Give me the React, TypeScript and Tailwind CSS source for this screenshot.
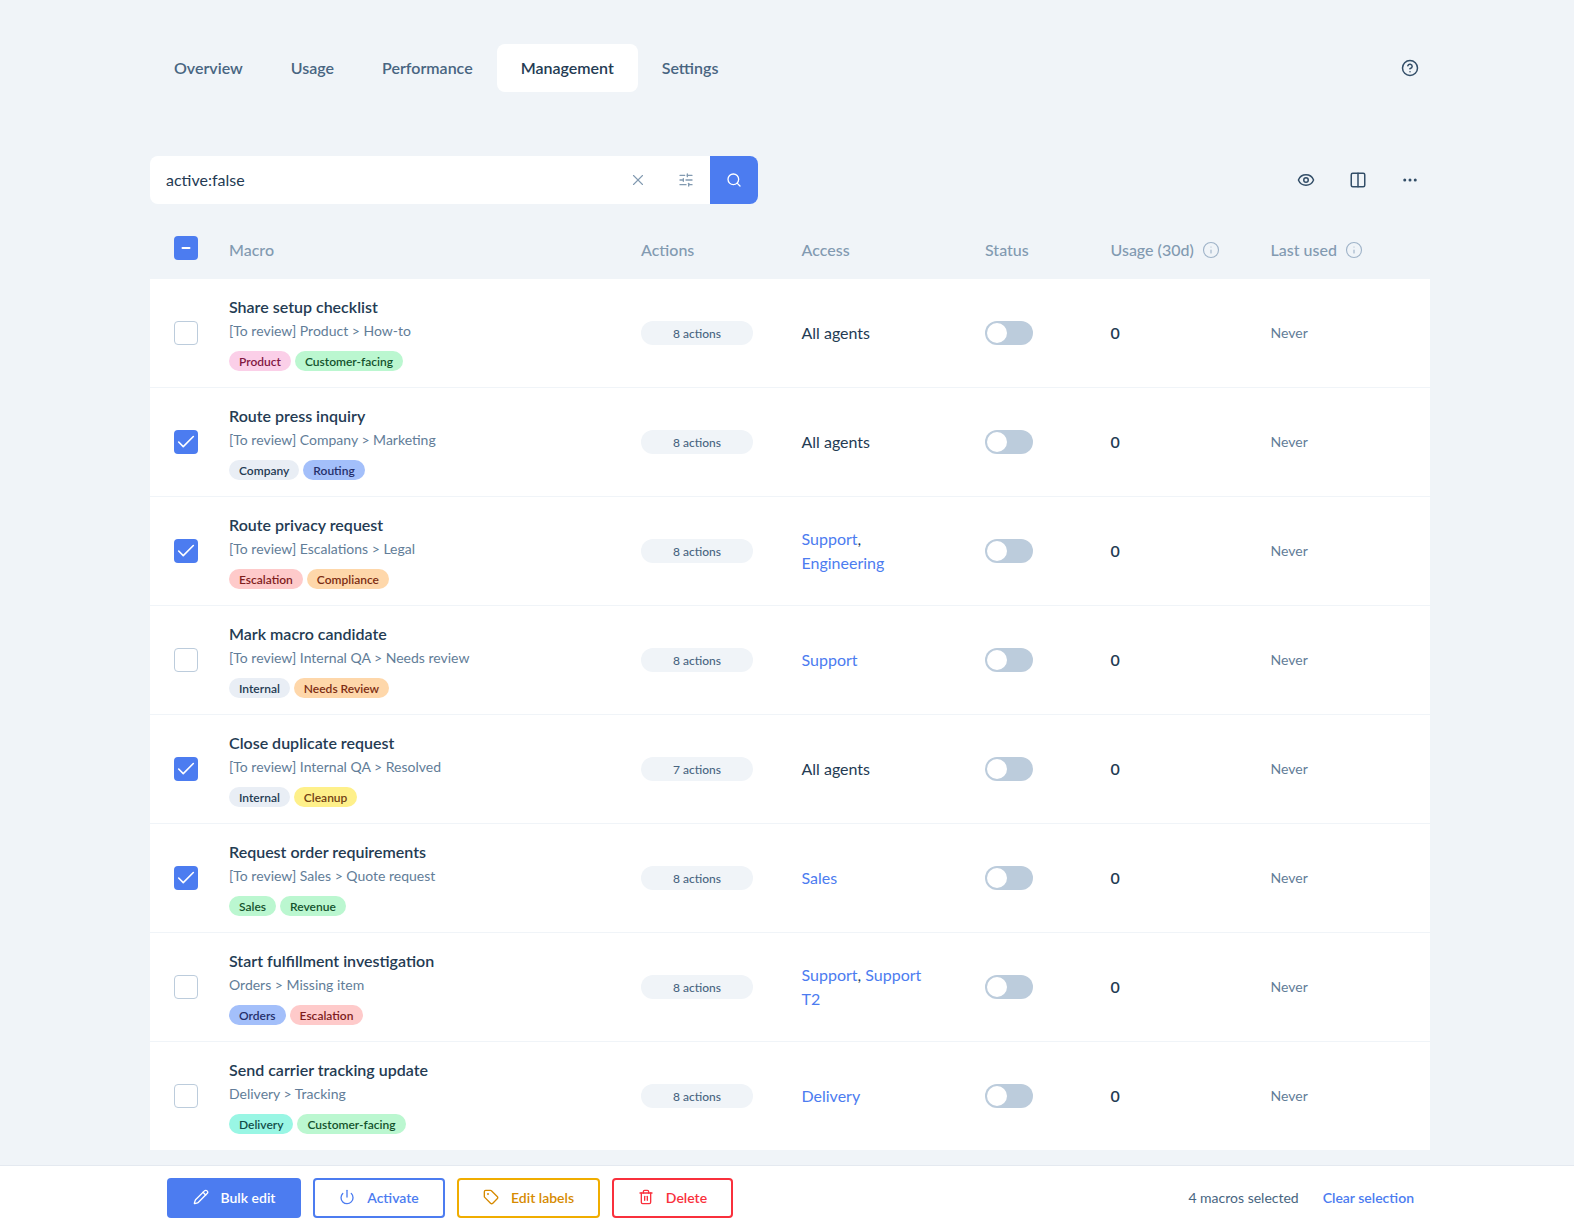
import { Check, CircleHelp, Columns2, Ellipsis, Eye, Info, Minus, Pencil, Power, Search, SlidersHorizontal, Tag, Trash2, X } from 'lucide-react'

const tagStyles: Record<string, string> = {
  Product: 'bg-[#fbcfe8] text-[#831843]',
  'Customer-facing': 'bg-[#bbf7d0] text-[#14532d]',
  Company: 'bg-[#e9eef5] text-[#243b53]',
  Routing: 'bg-[#a3bffa] text-[#252f6b]',
  Escalation: 'bg-[#fecaca] text-[#7f1d1d]',
  Compliance: 'bg-[#fed7aa] text-[#7c2d12]',
  Internal: 'bg-[#e9eef5] text-[#243b53]',
  'Needs Review': 'bg-[#fed7aa] text-[#7c2d12]',
  Cleanup: 'bg-[#fef08a] text-[#713f12]',
  Sales: 'bg-[#bbf7d0] text-[#14532d]',
  Revenue: 'bg-[#bbf7d0] text-[#14532d]',
  Orders: 'bg-[#a3bffa] text-[#252f6b]',
  Delivery: 'bg-[#99f6e4] text-[#134e4a]',
}

const rows = [
  { name: 'Share setup checklist', path: '[To review] Product > How-to', tags: ['Product', 'Customer-facing'], actions: 8, access: [], checked: false },
  { name: 'Route press inquiry', path: '[To review] Company > Marketing', tags: ['Company', 'Routing'], actions: 8, access: [], checked: true },
  { name: 'Route privacy request', path: '[To review] Escalations > Legal', tags: ['Escalation', 'Compliance'], actions: 8, access: ['Support', 'Engineering'], checked: true },
  { name: 'Mark macro candidate', path: '[To review] Internal QA > Needs review', tags: ['Internal', 'Needs Review'], actions: 8, access: ['Support'], checked: false },
  { name: 'Close duplicate request', path: '[To review] Internal QA > Resolved', tags: ['Internal', 'Cleanup'], actions: 7, access: [], checked: true },
  { name: 'Request order requirements', path: '[To review] Sales > Quote request', tags: ['Sales', 'Revenue'], actions: 8, access: ['Sales'], checked: true },
  { name: 'Start fulfillment investigation', path: 'Orders > Missing item', tags: ['Orders', 'Escalation'], actions: 8, access: ['Support', 'Support T2'], checked: false },
  { name: 'Send carrier tracking update', path: 'Delivery > Tracking', tags: ['Delivery', 'Customer-facing'], actions: 8, access: ['Delivery'], checked: false },
]

const gridCols = 'grid grid-cols-[79px_412px_160.5px_183.5px_125.5px_1fr] items-center'

function Access({ groups }: { groups: string[] }) {
  if (groups.length === 0) return <span className="text-[16px] text-[#243b53]">All agents</span>
  return (
    <div className="w-[130px] text-[16px] leading-6 text-[#4c7cf0]">
      {groups.map((g, i) => (
        <span key={g}>
          {g}
          {i < groups.length - 1 && <span className="text-[#243b53]">, </span>}
        </span>
      ))}
    </div>
  )
}

export default function App() {
  return (
    <div className="flex h-screen flex-col overflow-hidden bg-[#f0f4f8] font-['Lato',sans-serif]">
      <main className="mr-[144px] ml-[150px] flex-1">
        {/* Tabs */}
        <div className="flex items-center justify-between pt-11">
          <nav className="flex text-[16px] font-semibold text-[#486581]">
            <a className="flex h-12 items-center px-6">Overview</a>
            <a className="flex h-12 items-center px-6">Usage</a>
            <a className="flex h-12 items-center px-6">Performance</a>
            <a className="flex h-12 items-center rounded-lg bg-white px-6 text-[#243b53]">Management</a>
            <a className="flex h-12 items-center px-6">Settings</a>
          </nav>
          <CircleHelp size={18} strokeWidth={2} className="mr-[11px] text-[#334e68]" />
        </div>

        {/* Search */}
        <div className="mt-16 flex items-center justify-between">
          <div className="flex h-12 w-[608px] items-center overflow-hidden rounded-lg bg-white">
            <span className="flex-1 pl-4 text-[16px] text-[#243b53]">active:false</span>
            <X size={18} strokeWidth={1.5} className="mr-[31px] text-[#829ab1]" />
            <SlidersHorizontal size={16} strokeWidth={2} className="mr-4 text-[#829ab1]" />
            <div className="flex h-12 w-12 items-center justify-center bg-[#4c7cf0]">
              <Search size={16} strokeWidth={2} className="text-white" />
            </div>
          </div>
          <div className="mr-[11px] flex items-center gap-[34px] text-[#334e68]">
            <Eye size={18} strokeWidth={2} />
            <Columns2 size={18} strokeWidth={2} />
            <Ellipsis size={18} strokeWidth={2} />
          </div>
        </div>

        {/* Table header */}
        <div className={`${gridCols} h-[75px] pt-4 text-[16px] font-medium text-[#829ab1]`}>
          <div className="-mt-1 pl-6">
            <div className="flex h-6 w-6 items-center justify-center rounded bg-[#4c7cf0]">
              <Minus size={12} strokeWidth={4} className="text-white" />
            </div>
          </div>
          <span>Macro</span>
          <span>Actions</span>
          <span>Access</span>
          <span>Status</span>
          <div className="flex">
            <span className="flex w-[160px] items-center gap-2">
              Usage (30d) <Info size={18} strokeWidth={1.5} className="text-[#9fb3c8]" />
            </span>
            <span className="flex items-center gap-2">
              Last used <Info size={18} strokeWidth={1.5} className="text-[#9fb3c8]" />
            </span>
          </div>
        </div>

        {/* Rows */}
        <div className="bg-white">
          {rows.map((r) => (
            <div key={r.name} className={`${gridCols} h-[109px] border-b border-[#f0f4f8] last:h-[108px] last:border-b-0`}>
              <div className="pl-6">
                {r.checked ? (
                  <div className="flex h-6 w-6 items-center justify-center rounded bg-[#4c7cf0]">
                    <Check size={22} strokeWidth={1.75} className="text-white" />
                  </div>
                ) : (
                  <div className="h-6 w-6 rounded border border-[#bcccdc]" />
                )}
              </div>
              <div>
                <div className="text-[16px] leading-6 font-semibold text-[#243b53]">{r.name}</div>
                <div className="text-[14px] leading-6 text-[#627d98]">{r.path}</div>
                <div className="mt-2 flex gap-1">
                  {r.tags.map((t) => (
                    <span key={t} className={`flex h-5 items-center rounded-full px-2.5 pt-0.5 text-[12px] font-semibold ${tagStyles[t]}`}>
                      {t}
                    </span>
                  ))}
                </div>
              </div>
              <div>
                <span className="flex h-6 w-28 items-center justify-center rounded-full bg-[#f0f4f8] pt-0.5 text-[12px] font-medium text-[#486581]">
                  {r.actions} actions
                </span>
              </div>
              <Access groups={r.access} />
              <div>
                <div className="h-6 w-12 rounded-full bg-[#bcccdc] p-0.5">
                  <div className="h-5 w-5 rounded-full bg-white" />
                </div>
              </div>
              <div className="flex items-center">
                <span className="w-[160px] text-[16px] font-semibold text-[#243b53]">0</span>
                <span className="pb-0.5 text-[14px] text-[#627d98]">Never</span>
              </div>
            </div>
          ))}
        </div>
      </main>

      {/* Bulk action bar */}
      <footer className="flex h-[65px] items-center justify-between border-t border-[#e4e9f0] bg-white pr-[160px] pl-[167px] text-[14px]">
        <div className="flex items-center gap-3 font-semibold">
          <button className="flex h-10 w-[134px] items-center justify-center gap-3 rounded bg-[#4c7cf0] pb-0.5 text-white">
            <Pencil size={16} strokeWidth={2} /> Bulk edit
          </button>
          <button className="flex h-10 w-[132px] items-center justify-center gap-3 rounded border-2 border-[#4c7cf0] pb-0.5 text-[#4c7cf0]">
            <Power size={16} strokeWidth={2} /> Activate
          </button>
          <button className="flex h-10 w-[143px] items-center justify-center gap-3 rounded border-2 border-[#f0ad00] pb-0.5 text-[#d68a00]">
            <Tag size={16} strokeWidth={2} /> Edit labels
          </button>
          <button className="flex h-10 w-[121px] items-center justify-center gap-3 rounded border-2 border-[#f9303c] pb-0.5 text-[#f9303c]">
            <Trash2 size={16} strokeWidth={2} /> Delete
          </button>
        </div>
        <div className="flex items-center gap-6 pb-0.5">
          <span className="text-[#486581]">4 macros selected</span>
          <a className="font-semibold text-[#4c7cf0]">Clear selection</a>
        </div>
      </footer>
    </div>
  )
}
